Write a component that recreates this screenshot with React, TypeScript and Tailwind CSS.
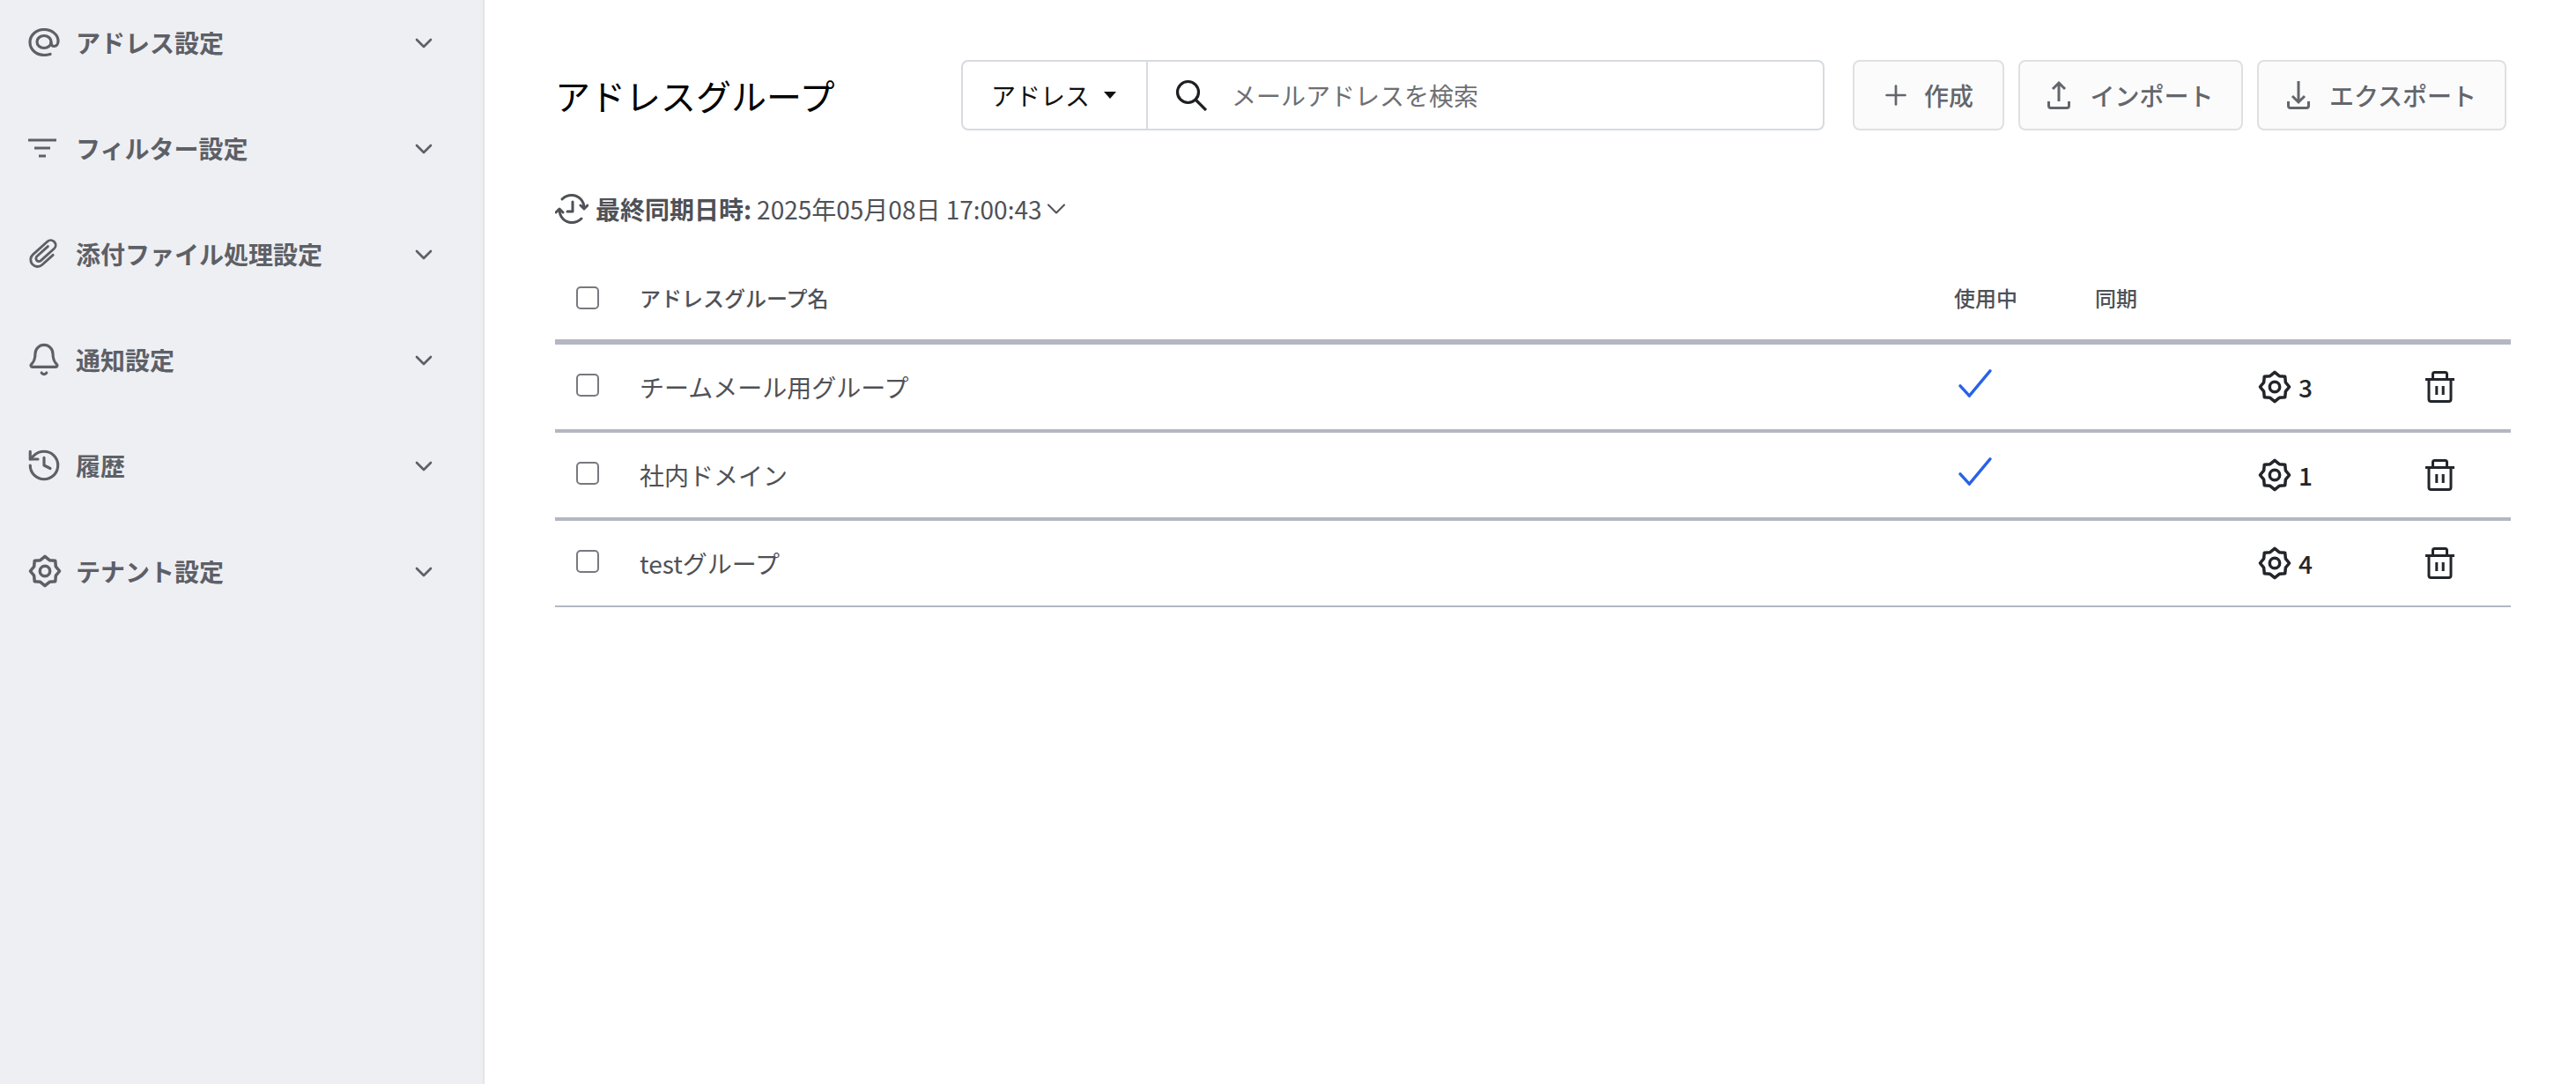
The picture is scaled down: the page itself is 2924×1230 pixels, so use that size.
import { Bell, ChevronDown, History, Plus } from 'lucide-react';
import type { ReactNode } from 'react';

const jp = "font-['Noto_Sans_CJK_JP','Noto_Sans',sans-serif]";

function AtIcon() {
  return (
    <svg viewBox="0 0 36 32" className="h-8 w-9" fill="none" stroke="currentColor" strokeWidth="3.200" strokeLinecap="round">
      <path d="M25 29.500c-2 .6-4.300 1-7 1C9 30.500 2 24 2 16S9 1.500 18 1.500 34 7.500 34 14.500c0 3.500-1.800 6-4.500 6-2 0-3.500-1.500-3.500-4.500" />
      <ellipse cx="18" cy="15.500" rx="8" ry="7" />
    </svg>
  );
}

function FilterIcon() {
  return (
    <svg viewBox="0 0 32 22" className="h-[22px] w-8" fill="none" stroke="currentColor" strokeWidth="3">
      <path d="M0 2h32M7 11h18M12 20h8" />
    </svg>
  );
}

function ClipIcon() {
  return (
    <svg viewBox="0 0 36 36" className="-ml-0.5 h-10 w-10" fill="none" stroke="currentColor" strokeWidth="2.600" strokeLinecap="round">
      <path transform="rotate(-42 18 18)" d="M24 25H9A7 7 0 0 1 9 11H29A5 5 0 0 1 29 21H11A3 3 0 0 1 11 15H26" />
    </svg>
  );
}

function GearIcon({ className }: { className: string }) {
  return (
    <svg viewBox="0 0 24 24" className={className} fill="none" stroke="currentColor" strokeWidth="2.200" strokeLinejoin="round">
      <path d="M12 1.500 15.300 4.200 19.400 4.600 19.800 8.700 22.500 12 19.800 15.300 19.400 19.400 15.300 19.800 12 22.500 8.700 19.800 4.600 19.400 4.200 15.300 1.500 12 4.200 8.700 4.600 4.600 8.700 4.200Z" />
      <circle cx="12" cy="12" r="3.600" />
    </svg>
  );
}

function SyncIcon() {
  return (
    <svg viewBox="0 0 38 38" className="h-[38px] w-[38px]" fill="none" stroke="#4f5157" strokeWidth="3" strokeLinecap="round" strokeLinejoin="round">
      <path d="M8 8c3-3 7-4.500 11-4.500 8 0 14 6.500 14 14.500" />
      <path d="M30 30c-3 3-7 4.500-11 4.500-8 0-14-6.500-14-14.500" />
      <path d="m1 23 4-4 4 4M29 15l4 4 4-4" />
      <path d="M20 11v11h-6" />
    </svg>
  );
}

function SearchIcon() {
  return (
    <svg viewBox="0 0 36 36" className="h-9 w-9" fill="none" stroke="#1d1f23" strokeWidth="3.200">
      <circle cx="14.500" cy="14.500" r="12" />
      <path d="m23 23 12 12" />
    </svg>
  );
}

function TrashIcon() {
  return (
    <svg viewBox="0 0 33 36" className="h-9 w-[33px]" fill="none" stroke="#22262b" strokeWidth="3" strokeLinejoin="round">
      <path d="M0 9.500h33M8.500 9V3.500a2 2 0 0 1 2-2h12a2 2 0 0 1 2 2V9" />
      <path d="M4 10v22a2.500 2.500 0 0 0 2.500 2.500h20A2.500 2.500 0 0 0 29 32V10" />
      <path d="M12.800 17v10M20.200 17v10" />
    </svg>
  );
}

function CheckIcon() {
  return (
    <svg viewBox="0 0 40 34" className="ml-px h-8 w-[38px]" fill="none" stroke="#2962e8" strokeWidth="3.600" strokeLinecap="round">
      <path d="M2 20l11 12L38 2" />
    </svg>
  );
}

function UploadIcon({ down = false }: { down?: boolean }) {
  return (
    <svg viewBox="0 0 26 32" className="h-[34px] w-[26px]" fill="none" stroke="#63666c" strokeWidth="3">
      {down ? <path d="M13 0v24M6 17l7 7 7-7" /> : <path d="M13 23V2M6 9l7-7 7 7" />}
      <path d="M1.500 23v5a2.500 2.500 0 0 0 2.500 2.500h18a2.500 2.500 0 0 0 2.500-2.500v-5" />
    </svg>
  );
}

function ActionButton({ icon, label, className }: { icon: ReactNode; label: string; className: string }) {
  return (
    <button type="button" className={`flex h-20 items-center justify-center rounded-lg border-2 border-[#dfe0e3] bg-[#fbfbfb] text-[28px] font-medium text-[#63666c] ${className}`}>
      {icon}
      <span>{label}</span>
    </button>
  );
}

const navItems: { label: string; icon: ReactNode }[] = [
  { label: 'アドレス設定', icon: <AtIcon /> },
  { label: 'フィルター設定', icon: <FilterIcon /> },
  { label: '添付ファイル処理設定', icon: <ClipIcon /> },
  { label: '通知設定', icon: <Bell className="-ml-0.5 h-10 w-10" strokeWidth={1.9} /> },
  { label: '履歴', icon: <History className="-ml-[3px] h-[42px] w-[42px]" strokeWidth={1.8} /> },
  { label: 'テナント設定', icon: <GearIcon className="h-[38px] w-[38px]" /> },
];

const rows = [
  { name: 'チームメール用グループ', active: true, count: 3, border: 'h-[100px] border-b-4' },
  { name: '社内ドメイン', active: true, count: 1, border: 'h-[100px] border-b-4' },
  { name: 'testグループ', active: false, count: 4, border: 'h-[98px] border-b-2' },
];

const columns = 'grid grid-cols-[96px_1492px_160px_186px_189px_97px] items-center';

export default function App() {
  return (
    <div className={`flex min-h-[1230px] bg-white ${jp}`}>
      <aside className="w-[550px] shrink-0 border-r-2 border-[#e3e4e9] bg-[#eeeff3]">
        <nav className="-mt-3 flex flex-col pl-8 pr-[51px]">
          {navItems.map((item) => (
            <div key={item.label} className="flex h-[120px] items-center text-[#5d6066]">
              <span className="flex h-[42px] w-[54px] shrink-0 items-center justify-start">{item.icon}</span>
              <span className="flex-1 text-[28px] font-bold">{item.label}</span>
              <ChevronDown className="mt-px h-8 w-8" strokeWidth={2} />
            </div>
          ))}
        </nav>
      </aside>

      <main className="min-w-0 flex-1 pl-20 pr-[74px] pt-[68px]">
        <div className="flex items-center">
          <h1 className="w-[461px] shrink-0 text-[40px] font-normal text-black">アドレスグループ</h1>
          <div className="flex h-20 w-[980px] shrink-0 rounded-lg border-2 border-[#d7dae0]">
            <div className="flex w-[210px] shrink-0 items-center gap-4 border-r-2 border-[#d7dae0] pl-8 text-[28px] text-[#111]">
              <span>アドレス</span>
              <span className="h-0 w-0 border-x-[7px] border-t-[8px] border-x-transparent border-t-[#111]" />
            </div>
            <div className="flex flex-1 items-center gap-7 pl-[31px] text-[28px] text-[#6d6f74]">
              <SearchIcon />
              <span>メールアドレスを検索</span>
            </div>
          </div>
          <div className="ml-[32px] flex gap-4">
            <ActionButton icon={<Plus className="h-9 w-9" strokeWidth={1.8} />} label="作成" className="w-[172px] gap-[14px] pr-1" />
            <ActionButton icon={<UploadIcon />} label="インポート" className="w-[255px] gap-[22px]" />
            <ActionButton icon={<UploadIcon down />} label="エクスポート" className="w-[283px] gap-[22px]" />
          </div>
        </div>

        <div className="mt-[69px] flex h-10 items-center text-[28px] text-[#4f5157]">
          <SyncIcon />
          <span className="ml-2 font-bold">最終同期日時:</span>
          <span className="ml-1.5">2025年05月08日 17:00:43</span>
          <ChevronDown className="-ml-0.5 h-9 w-9" strokeWidth={1.4} />
        </div>

        <div className="mt-[34px] w-[2220px]">
          <div className={`${columns} h-[100px] border-b-[6px] border-[#b4b7c2] text-2xl font-medium text-[#4f5157]`}>
            <span className="ml-6 block h-[26px] w-[26px] rounded-[5px] border-2 border-[#77797e] bg-white" />
            <span>アドレスグループ名</span>
            <span>使用中</span>
            <span>同期</span>
          </div>
          {rows.map((row) => (
            <div key={row.name} className={`${columns} border-[#b4b7c2] text-[28px] text-[#4f5157] ${row.border}`}>
              <span className="mb-1 ml-6 block h-[26px] w-[26px] rounded-[5px] border-2 border-[#77797e] bg-white" />
              <span>{row.name}</span>
              <span className="pb-2 pl-1">{row.active && <CheckIcon />}</span>
              <span />
              <span className="-ml-px flex items-center gap-2 font-medium text-[#22262b]">
                <GearIcon className="h-[38px] w-[38px]" />
                {row.count}
              </span>
              <span><TrashIcon /></span>
            </div>
          ))}
        </div>
      </main>
    </div>
  );
}
